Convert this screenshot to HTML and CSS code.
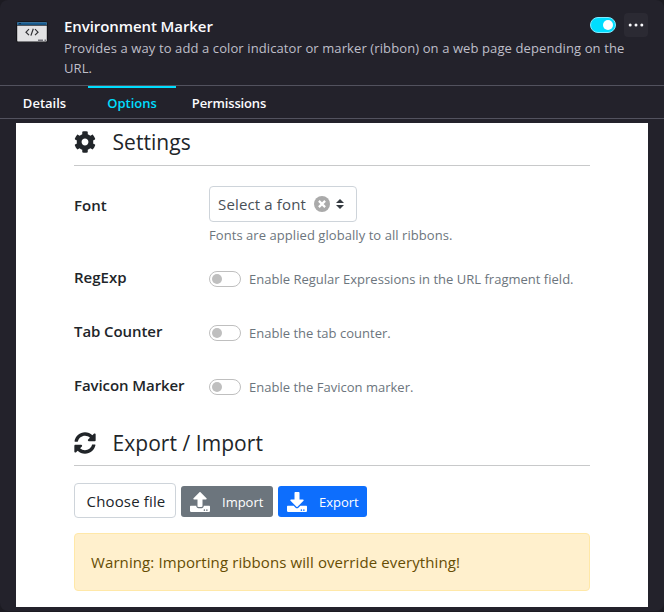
FILE: index.html
```html
<!DOCTYPE html>
<html lang="en">
<head>
<meta charset="utf-8">
<title>Environment Marker</title>
<link rel="stylesheet" href="styles.css">
</head>
<body>
<main class="card">
  <header class="header">
    <svg class="addon-icon" viewBox="0 0 32 32">
      <rect x=".6" y="5.6" width="30.8" height="20.6" rx="1.8" fill="#e2e2e4" stroke="#15151a" stroke-width="1.2"/>
      <path d="M1.2 6.2h29.6v3H1.2z" fill="#185d92"/>
      <path d="M1 9.3h30" stroke="#15151a" stroke-width=".8"/>
      <path d="M3 7.6h2" stroke="#0b2b48"/>
      <path d="M13 13.2l-3 3 3 3M19 13.2l3 3-3 3M17.3 12.8l-2.4 6.8" fill="none" stroke="#303034" stroke-width="1.2"/>
      <path d="M22 24.3h5M28.5 24.3H30" stroke="#707078" stroke-width="1.4"/>
    </svg>
    <div class="about">
      <div class="title-row">
        <h1 class="name">Environment Marker</h1>
        <div class="actions">
          <span class="toggle"><span class="knob"></span></span>
          <button class="more"><svg width="16" height="4" viewBox="0 0 16 4" fill="#fbfbfe"><circle cx="2.2" cy="2" r="1.5"/><circle cx="8" cy="2" r="1.5"/><circle cx="13.8" cy="2" r="1.5"/></svg></button>
        </div>
      </div>
      <p class="desc">Provides a way to add a color indicator or marker (ribbon) on a web page depending on the URL.</p>
    </div>
  </header>
  <nav class="tabs">
    <a class="tab tab-details">Details</a>
    <a class="tab tab-active">Options</a>
    <a class="tab tab-perms">Permissions</a>
  </nav>
  <section class="options">
    <h2 class="heading"><svg class="heading-icon" viewBox="0 0 512 512"><path d="M487.4 315.7l-42.6-24.6c4.3-23.2 4.3-47 0-70.2l42.6-24.6c4.9-2.8 7.1-8.6 5.5-14-11.1-35.6-30-67.8-54.7-94.6-3.8-4.1-10-5.1-14.8-2.3L380.8 110c-17.9-15.4-38.5-27.3-60.8-35.1V25.8c0-5.6-3.9-10.5-9.4-11.7-36.7-8.2-74.3-7.8-109.2 0-5.5 1.2-9.4 6.1-9.4 11.7V75c-22.2 7.9-42.8 19.8-60.8 35.1L88.7 85.5c-4.9-2.8-11-1.9-14.8 2.3-24.7 26.7-43.6 58.9-54.7 94.6-1.7 5.4.6 11.2 5.5 14L67.3 221c-4.3 23.2-4.3 47 0 70.2l-42.6 24.6c-4.9 2.8-7.1 8.6-5.5 14 11.1 35.6 30 67.8 54.7 94.6 3.8 4.1 10 5.1 14.8 2.3l42.6-24.6c17.9 15.4 38.5 27.3 60.8 35.1v49.2c0 5.6 3.9 10.5 9.4 11.7 36.7 8.2 74.3 7.8 109.2 0 5.5-1.2 9.4-6.1 9.4-11.7v-49.2c22.2-7.9 42.8-19.8 60.8-35.1l42.6 24.6c4.9 2.8 11 1.9 14.8-2.3 24.7-26.7 43.6-58.9 54.7-94.6 1.5-5.5-.7-11.3-5.6-14.1zM256 336c-44.1 0-80-35.9-80-80s35.9-80 80-80 80 35.9 80 80-35.9 80-80 80z"/></svg><span>Settings</span></h2>
    <div class="field field-font">
      <div class="label">Font</div>
      <div>
        <div class="select">
          <span class="select-text">Select a font</span>
          <svg class="clear" viewBox="0 0 16 16"><circle cx="8" cy="8" r="8" fill="#aaa"/><path d="M4.9 4.9l6.2 6.2M11.1 4.9l-6.2 6.2" stroke="#fff" stroke-width="2.2"/></svg>
          <svg class="caret" viewBox="0 0 8 10"><path d="M0 4l4-4 4 4zM0 6l4 4 4-4z" fill="#343a40"/></svg>
        </div>
        <div class="hint hint-font">Fonts are applied globally to all ribbons.</div>
      </div>
    </div>
    <div class="field">
      <div class="label">RegExp</div>
      <div class="switch-row"><span class="switch"></span><span class="hint">Enable Regular Expressions in the URL fragment field.</span></div>
    </div>
    <div class="field">
      <div class="label label-long">Tab Counter</div>
      <div class="switch-row"><span class="switch"></span><span class="hint">Enable the tab counter.</span></div>
    </div>
    <div class="field field-last">
      <div class="label label-long">Favicon Marker</div>
      <div class="switch-row"><span class="switch"></span><span class="hint">Enable the Favicon marker.</span></div>
    </div>
    <h2 class="heading heading-io"><svg class="heading-icon" viewBox="0 0 512 512"><path d="M370.72 133.28C339.458 104.008 298.888 87.962 255.848 88c-77.458.068-144.328 53.178-162.791 126.85-1.344 5.363-6.122 9.15-11.651 9.15H24.103c-7.498 0-13.194-6.807-11.807-14.176C33.933 94.924 134.813 8 256 8c66.448 0 126.791 26.136 171.315 68.685L463.03 40.97C478.149 25.851 504 36.559 504 57.941V192c0 13.255-10.745 24-24 24H345.941c-21.382 0-32.09-25.851-16.971-40.971l41.75-41.749zM32 296h134.059c21.382 0 32.09 25.851 16.971 40.971l-41.75 41.75c31.262 29.273 71.835 45.319 114.876 45.28 77.418-.07 144.315-53.144 162.787-126.849 1.344-5.363 6.122-9.15 11.651-9.15h57.304c7.498 0 13.194 6.807 11.807 14.176C478.067 417.076 377.187 504 256 504c-66.448 0-126.791-26.136-171.315-68.685L48.97 471.03C33.851 486.149 8 475.441 8 454.059V320c0-13.255 10.745-24 24-24z"/></svg><span>Export / Import</span></h2>
    <div class="buttons">
      <button class="choose">Choose file</button>
      <button class="btn btn-import"><svg viewBox="0 0 512 512"><path d="M296 384h-80c-13.3 0-24-10.7-24-24V192h-87.7c-17.8 0-26.7-21.5-14.1-34.1L242.3 5.7c7.5-7.5 19.8-7.5 27.3 0l152.2 152.2c12.6 12.6 3.7 34.1-14.1 34.1H320v168c0 13.3-10.7 24-24 24zm216-8v112c0 13.3-10.7 24-24 24H24c-13.3 0-24-10.7-24-24V376c0-13.3 10.7-24 24-24h136v8c0 30.9 25.1 56 56 56h80c30.9 0 56-25.1 56-56v-8h136c13.3 0 24 10.7 24 24zm-124 88c0-11-9-20-20-20s-20 9-20 20 9 20 20 20 20-9 20-20zm64 0c0-11-9-20-20-20s-20 9-20 20 9 20 20 20 20-9 20-20z"/></svg><span>Import</span></button>
      <button class="btn btn-export"><svg viewBox="0 0 512 512"><path d="M216 0h80c13.3 0 24 10.7 24 24v168h87.7c17.8 0 26.7 21.5 14.1 34.1L269.7 378.3c-7.5 7.5-19.8 7.5-27.3 0L90.1 226.1c-12.6-12.6-3.7-34.1 14.1-34.1H192V24c0-13.3 10.7-24 24-24zm296 376v112c0 13.3-10.7 24-24 24H24c-13.3 0-24-10.7-24-24V376c0-13.3 10.7-24 24-24h146.7l49 49c20.1 20.1 52.5 20.1 72.6 0l49-49H488c13.3 0 24 10.7 24 24zm-124 88c0-11-9-20-20-20s-20 9-20 20 9 20 20 20 20-9 20-20zm64 0c0-11-9-20-20-20s-20 9-20 20 9 20 20 20 20-9 20-20z"/></svg><span>Export</span></button>
    </div>
    <div class="alert">Warning: Importing ribbons will override everything!</div>
  </section>
</main>
</body>
</html>
```
FILE: styles.css
```css
* { box-sizing: border-box; }
html { background: #1c1b22; }
body {
  margin: 0;
  width: 664px;
  height: 612px;
  overflow: hidden;
  font-family: "Open Sans", "Noto Sans", sans-serif;
}
h1, h2, p { margin: 0; }
button { font-family: inherit; border: 0; padding: 0; }
.card { height: 611px; background: #23222b; border-radius: 8px; white-space: nowrap; }

.header { display: flex; gap: 16px; height: 86px; padding: 13px 16px 0; border-bottom: 1px solid #52525e; }
.addon-icon { width: 32px; height: 32px; margin-top: 3px; flex: none; }
.about { flex: 1; }
.title-row { display: flex; justify-content: space-between; align-items: center; height: 24px; margin-bottom: 1px; }
.name { padding-top: 2px; font-size: 15px; line-height: 22px; font-weight: 600; color: #fbfbfe; letter-spacing: -.08px; }
.desc { font-size: 13px; line-height: 20px; color: #bfbfc9; white-space: normal; letter-spacing: .105px; }
.actions { display: flex; gap: 8px; align-items: center; }
.toggle { width: 26px; height: 16px; border-radius: 8px; background: #00ddff; border: 1px solid #80ebff; display: flex; justify-content: flex-end; align-items: center; padding-right: 2px; }
.knob { width: 10px; height: 10px; border-radius: 50%; background: #fff; }
.more { width: 24px; height: 24px; border-radius: 4px; background: #2b2a33; display: flex; align-items: center; justify-content: center; }

.tabs { display: flex; height: 33px; border-bottom: 1px solid #52525e; font-size: 13px; font-weight: 600; line-height: 30px; color: #fbfbfe; }
.tab { border-top: 2px solid transparent; width: 88px; text-align: center; }
.tab-active { border-color: #00ddff; color: #00ddff; }
.tab-details { padding-left: 1px; }
.tab-perms { width: 106px; letter-spacing: -.15px; }

.options { margin: 4px 16px 0; height: 484px; background: #fff; padding: 0 58px; color: #212529; }
.heading { display: flex; align-items: center; height: 43px; padding-bottom: 5px; border-bottom: 1px solid #c8c9ca; font-weight: 400; font-size: 21px; letter-spacing: .05px; }
.heading-io { padding-bottom: 3px; }
.heading-icon { width: 22px; height: 22px; margin-right: 16.5px; fill: #212529; flex: none; }
.field { display: grid; grid-template-columns: 135px 1fr; height: 54px; }
.field-font { height: 99px; padding-top: 20px; }
.field-last { height: 50px; }
.label { font-size: 15px; font-weight: 600; line-height: 24px; }
.label-long { letter-spacing: -.08px; }
.field-font .label { padding-top: 7px; }
.select { width: 148px; height: 36px; border: 1px solid #ced4da; border-radius: 4px; display: flex; align-items: center; padding-left: 8px; font-size: 15px; color: #495057; letter-spacing: .15px; }
.select-text { width: 96px; }
.clear { width: 16px; height: 16px; flex: none; }
.caret { width: 8px; height: 10px; margin-left: 6px; flex: none; }
.hint { font-size: 13px; line-height: 20px; color: #6c757d; letter-spacing: .01px; }
.hint-font { margin-top: 3px; letter-spacing: .06px; }
.switch-row { display: flex; align-items: center; height: 28px; }
.switch { width: 32px; height: 16px; border: 1px solid #bfbfbf; border-radius: 8px; margin-right: 8px; padding: 2px; }
.switch::before { content: ""; display: block; width: 10px; height: 10px; border-radius: 50%; background: #bfbfbf; }
.buttons { display: flex; align-items: flex-start; height: 35px; margin-top: 17px; }
.choose { width: 102px; height: 35px; padding-left: 2px; border: 1px solid #ced4da; border-radius: 4px; background: #fff; color: #212529; font-size: 15px; letter-spacing: .15px; }
.btn { display: flex; align-items: center; height: 31px; border-radius: 3px; color: #fff; font-size: 13px; margin: 3px 0 0 5px; padding-left: 8.5px; }
.btn svg { width: 20px; height: 20px; fill: #fff; margin-right: 12.5px; flex: none; }
.btn-import { width: 92px; background: #6c757d; }
.btn-export { width: 89px; background: #0d6efd; }
.alert { margin-top: 15px; height: 58px; border: 1px solid #ffe8a8; border-radius: 4px; background: #fff0cd; color: #664d03; font-size: 15px; line-height: 56px; padding-left: 16px; letter-spacing: .1px; }
```
